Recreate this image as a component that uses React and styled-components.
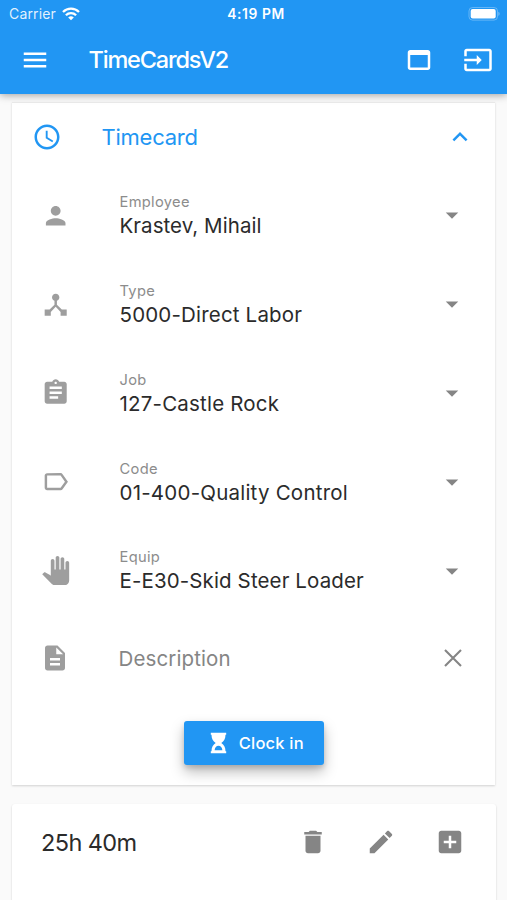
import React from "react";
import styled, { createGlobalStyle } from "styled-components";

const BLUE = "#2196f3";

const GlobalStyle = createGlobalStyle`
  *, *::before, *::after { box-sizing: border-box; }
  html, body { margin: 0; background: #fafafa; }
  body { font-family: Inter, "Liberation Sans", sans-serif; overflow: hidden; }
`;

const paths = {
  menu: "M3 18h18v-2H3v2zm0-5h18v-2H3v2zm0-7v2h18V6H3z",
  window:
    "M19 4H5c-1.11 0-2 .9-2 2v12c0 1.1.89 2 2 2h14c1.1 0 2-.9 2-2V6c0-1.1-.89-2-2-2zm0 14H5V8h14v10z",
  input:
    "M21 3.01H3c-1.1 0-2 .9-2 2V9h2V4.99h18v14.03H3V15H1v4.01c0 1.1.9 1.98 2 1.98h18c1.1 0 2-.88 2-1.98v-14c0-1.11-.9-2-2-2zM11 16l4-4-4-4v3H1v2h10v3z",
  clock:
    "M11.99 2C6.47 2 2 6.48 2 12s4.47 10 9.99 10C17.52 22 22 17.52 22 12S17.52 2 11.99 2zM12 20c-4.42 0-8-3.58-8-8s3.58-8 8-8 8 3.58 8 8-3.58 8-8 8zm.5-13H11v6l5.25 3.15.75-1.23-4.5-2.67z",
  collapse: "M12 8l-6 6 1.41 1.41L12 10.83l4.59 4.58L18 14z",
  person:
    "M12 12c2.21 0 4-1.79 4-4s-1.79-4-4-4-4 1.79-4 4 1.79 4 4 4zm0 2c-2.67 0-8 1.34-8 4v2h16v-2c0-2.66-5.33-4-8-4z",
  hub: "M17 16l-4-4V8.82C14.16 8.4 15 7.3 15 6c0-1.66-1.34-3-3-3S9 4.34 9 6c0 1.3.84 2.4 2 2.82V12l-4 4H3v5h5v-3.05l4-4.2 4 4.2V21h5v-5h-4z",
  clipboard:
    "M19 3h-4.18C14.4 1.84 13.3 1 12 1c-1.3 0-2.4.84-2.82 2H5c-1.1 0-2 .9-2 2v14c0 1.1.9 2 2 2h14c1.1 0 2-.9 2-2V5c0-1.1-.9-2-2-2zm-7 0c.55 0 1 .45 1 1s-.45 1-1 1-1-.45-1-1 .45-1 1-1zm2 14H7v-2h7v2zm3-4H7v-2h10v2zm0-4H7V7h10v2z",
  label:
    "M17.63 5.84C17.27 5.33 16.67 5 16 5L5 5.01C3.9 5.01 3 5.9 3 7v10c0 1.1.9 1.99 2 1.99L16 19c.67 0 1.27-.33 1.63-.84L22 12l-4.37-6.16zM16 17H5V7h11l3.55 5L16 17z",
  hand: "M23 5.5V20c0 2.2-1.8 4-4 4h-7.3c-1.08 0-2.1-.43-2.85-1.19L1 14.83s1.26-1.23 1.3-1.25c.22-.19.49-.29.79-.29.22 0 .42.06.6.16.04.01 4.31 2.46 4.31 2.46V4c0-.83.67-1.5 1.5-1.5S11 3.17 11 4v7h1V1.5c0-.83.67-1.5 1.5-1.5S15 .67 15 1.5V11h1V2.5c0-.83.67-1.5 1.5-1.5s1.5.67 1.5 1.5V11h1V5.5c0-.83.67-1.5 1.5-1.5s1.5.67 1.5 1.5z",
  document:
    "M14 2H6c-1.1 0-1.99.9-1.99 2L4 20c0 1.1.89 2 1.99 2H18c1.1 0 2-.9 2-2V8l-6-6zm2 16H8v-2h8v2zm0-4H8v-2h8v2zm-3-5V3.5L18.5 9H13z",
  caret: "M7 10l5 5 5-5z",
  trash: "M6 19c0 1.1.9 2 2 2h8c1.1 0 2-.9 2-2V7H6v12zM19 4h-3.5l-1-1h-5l-1 1H5v2h14V4z",
  pencil:
    "M3 17.25V21h3.75L17.81 9.94l-3.75-3.75L3 17.25zM20.71 7.04c.39-.39.39-1.02 0-1.41l-2.34-2.34c-.39-.39-1.02-.39-1.41 0l-1.83 1.83 3.75 3.75 1.83-1.83z",
  addBox:
    "M19 3H5c-1.11 0-2 .9-2 2v14c0 1.1.89 2 2 2h14c1.1 0 2-.9 2-2V5c0-1.1-.9-2-2-2zm-2 10h-4v4h-2v-4H7v-2h4V7h2v4h4v2z",
};

const Glyph = styled.svg`
  display: block;
  flex: none;
  width: ${(p) => p.$size}px;
  height: ${(p) => p.$size}px;
  fill: currentColor;
`;

const Icon = ({ name, size = 30 }) => (
  <Glyph viewBox="0 0 24 24" $size={size} aria-hidden="true">
    <path d={paths[name]} />
  </Glyph>
);

const Screen = styled.div`
  width: 507px;
  height: 900px;
  overflow: hidden;
  display: flex;
  flex-direction: column;
  background: #fafafa;
`;

const Header = styled.header`
  position: relative;
  z-index: 1;
  flex: none;
  height: 94px;
  color: #fff;
  background: ${BLUE};
  box-shadow: 0 1px 8px rgba(0, 0, 0, 0.38);
`;

const StatusBar = styled.div`
  height: 28px;
  padding: 0 7px 0 9px;
  display: grid;
  grid-template-columns: 1fr auto 1fr;
  align-items: center;
  line-height: 28px;
`;

const Carrier = styled.div`
  display: flex;
  align-items: center;
  gap: 6px;
  font-size: 14px;
  letter-spacing: 0.15px;
  color: rgba(255, 255, 255, 0.88);
`;

const Time = styled.div`
  font-size: 13.8px;
  font-weight: 600;
  letter-spacing: 0.6px;
  padding-left: 3px;
`;

const StatusGlyph = styled.svg`
  display: block;
  justify-self: ${(p) => p.$align || "start"};
`;

const AppBar = styled.div`
  height: 64px;
  padding: 0 14.5px 0 20px;
  display: flex;
  align-items: center;
`;

const Title = styled.h1`
  margin: 0 0 0 38.5px;
  flex: 1;
  font-size: 23.5px;
  line-height: 30px;
  font-weight: 500;
  letter-spacing: -1.17px;
`;

const BarActions = styled.div`
  display: flex;
  gap: 28.5px;
`;

const Card = styled.section`
  flex: none;
  margin: 8px 12.5px 0 12px;
  height: 683px;
  background: #fff;
  border-top: 1px solid #ebebeb;
  box-shadow: 0 1px 2px rgba(0, 0, 0, 0.16);
  display: flex;
  flex-direction: column;
`;

const CardHeader = styled.div`
  height: 68px;
  padding: 0 19.5px 0 20px;
  display: flex;
  align-items: center;
  color: ${BLUE};
`;

const CardTitle = styled.h2`
  flex: 1;
  margin: 0 0 0 39.5px;
  font-size: 22px;
  line-height: 28px;
  font-weight: 400;
  letter-spacing: -0.25px;
`;

const Field = styled.div`
  height: ${(p) => p.$height || 88.8}px;
  padding: 0 28px 0 29px;
  display: grid;
  grid-template-columns: 30px 1fr 30px;
  column-gap: 48.5px;
  align-items: center;
  color: #9e9e9e;
`;

const FieldIcon = styled.div`
  display: flex;
  justify-content: center;
  padding-right: ${(p) => p.$shift || 0}px;
`;

const FieldText = styled.div`
  white-space: nowrap;
  padding-top: 0.8px;
`;

const FieldLabel = styled.div`
  font-size: 14.7px;
  line-height: 20px;
  letter-spacing: 0.3px;
  color: #8c8c8c;
`;

const FieldValue = styled.div`
  font-size: 20.5px;
  line-height: 27px;
  letter-spacing: ${(p) => p.$spacing ?? 0}px;
  color: #2b2b2b;
`;

const Placeholder = styled(FieldValue)`
  margin-left: -1px;
  color: #858585;
`;

const FieldAction = styled.div`
  color: #858585;
`;

const ClockButton = styled.button`
  align-self: center;
  width: 140px;
  height: 44px;
  margin: 19px 0 0 1px;
  padding: 0 0 0 26px;
  border: 0;
  border-radius: 3px;
  display: flex;
  align-items: center;
  gap: 12px;
  font: 500 16.5px/24px Inter, "Liberation Sans", sans-serif;
  letter-spacing: 0.2px;
  white-space: nowrap;
  color: #fff;
  background: ${BLUE};
  box-shadow: 0 7px 14px rgba(0, 0, 0, 0.26), 0 3px 5px rgba(0, 0, 0, 0.14);
`;

const SummaryCard = styled.section`
  flex: none;
  height: 110px;
  margin: 19px 11px 0 12px;
  padding: 23px 31.5px 0 29px;
  display: flex;
  align-items: flex-start;
  background: #fff;
  border-radius: 3px;
  box-shadow: 0 1px 2px rgba(0, 0, 0, 0.2);
`;

const Duration = styled.div`
  flex: 1;
  font-size: 23.5px;
  line-height: 31px;
  letter-spacing: -0.6px;
  color: #2b2b2b;
`;

const SummaryActions = styled.div`
  display: flex;
  gap: 38.5px;
  color: #858585;
`;

const fields = [
  { icon: "person", label: "Employee", value: "Krastev, Mihail", spacing: 0.05 },
  { icon: "hub", label: "Type", value: "5000-Direct Labor", spacing: 0.18 },
  { icon: "clipboard", label: "Job", value: "127-Castle Rock", spacing: 0.2 },
  { icon: "label", label: "Code", value: "01-400-Quality Control", spacing: 0.22 },
  { icon: "hand", label: "Equip", value: "E-E30-Skid Steer Loader", spacing: 0.12 },
];

const Wifi = () => (
  <StatusGlyph width="18" height="14" viewBox="0 0 18 14" aria-hidden="true">
    <g fill="none" stroke="#fff" strokeWidth="2.3">
      <path d="M1 5a11.4 11.4 0 0 1 16 0" />
      <path d="M3.9 8.2a7.2 7.2 0 0 1 10.2 0" />
    </g>
    <path d="M9 13.2 6.2 10.5a4 4 0 0 1 5.6 0z" fill="#fff" />
  </StatusGlyph>
);

const Battery = () => (
  <StatusGlyph $align="end" width="32" height="14" viewBox="0 0 32 14" aria-hidden="true">
    <rect x="1" y=".5" width="28.5" height="12.6" rx="3.5" fill="none" stroke="#fff" strokeOpacity=".3" />
    <rect x="2.7" y="2" width="25" height="9.6" rx="2" fill="#fff" />
    <path d="M30.4 4.8c1.6.7 1.6 3.4 0 4.1z" fill="#fff" fillOpacity=".4" />
  </StatusGlyph>
);

const Hourglass = () => (
  <svg width="17" height="22" viewBox="0 0 17 22" aria-hidden="true">
    <path
      fill="#fff"
      fillRule="evenodd"
      d="M.8.8h15.4v1.9h-.7c0 4.200-1.600 6.400-4.200 8.300 2.600 1.900 4.200 4.300 4.200 8.300h.7v1.900H.8v-1.900h.7c0-4 1.600-6.400 4.200-8.300C3.100 9.100 1.500 6.900 1.500 2.700H.8zM4.600 18.300h7.800c-.3-2.900-1.700-4.500-3.900-4.500s-3.600 1.600-3.900 4.500z"
    />
  </svg>
);

const Close = () => (
  <Glyph viewBox="0 0 30 30" $size={30} aria-hidden="true">
    <path d="M8 7 24 23M24 7 8 23" fill="none" stroke="currentColor" strokeWidth="2.1" />
  </Glyph>
);

export default function App() {
  return (
    <>
      <GlobalStyle />
      <Screen>
        <Header>
          <StatusBar>
            <Carrier>
              Carrier <Wifi />
            </Carrier>
            <Time>4:19 PM</Time>
            <Battery />
          </StatusBar>
          <AppBar>
            <Icon name="menu" />
            <Title>TimeCardsV2</Title>
            <BarActions>
              <Icon name="window" />
              <Icon name="input" />
            </BarActions>
          </AppBar>
        </Header>

        <Card>
          <CardHeader>
            <Icon name="clock" />
            <CardTitle>Timecard</CardTitle>
            <Icon name="collapse" />
          </CardHeader>
          {fields.map((f) => (
            <Field key={f.label}>
              <FieldIcon>
                <Icon name={f.icon} size={29.4} />
              </FieldIcon>
              <FieldText>
                <FieldLabel>{f.label}</FieldLabel>
                <FieldValue $spacing={f.spacing}>{f.value}</FieldValue>
              </FieldText>
              <FieldAction>
                <Icon name="caret" />
              </FieldAction>
            </Field>
          ))}
          <Field $height={87}>
            <FieldIcon $shift={2.6}>
              <Icon name="document" />
            </FieldIcon>
            <Placeholder $spacing={0.12}>Description</Placeholder>
            <FieldAction>
              <Close />
            </FieldAction>
          </Field>
          <ClockButton type="button">
            <Hourglass />
            Clock in
          </ClockButton>
        </Card>

        <SummaryCard>
          <Duration>25h 40m</Duration>
          <SummaryActions>
            <Icon name="trash" />
            <Icon name="pencil" />
            <Icon name="addBox" />
          </SummaryActions>
        </SummaryCard>
      </Screen>
    </>
  );
}
